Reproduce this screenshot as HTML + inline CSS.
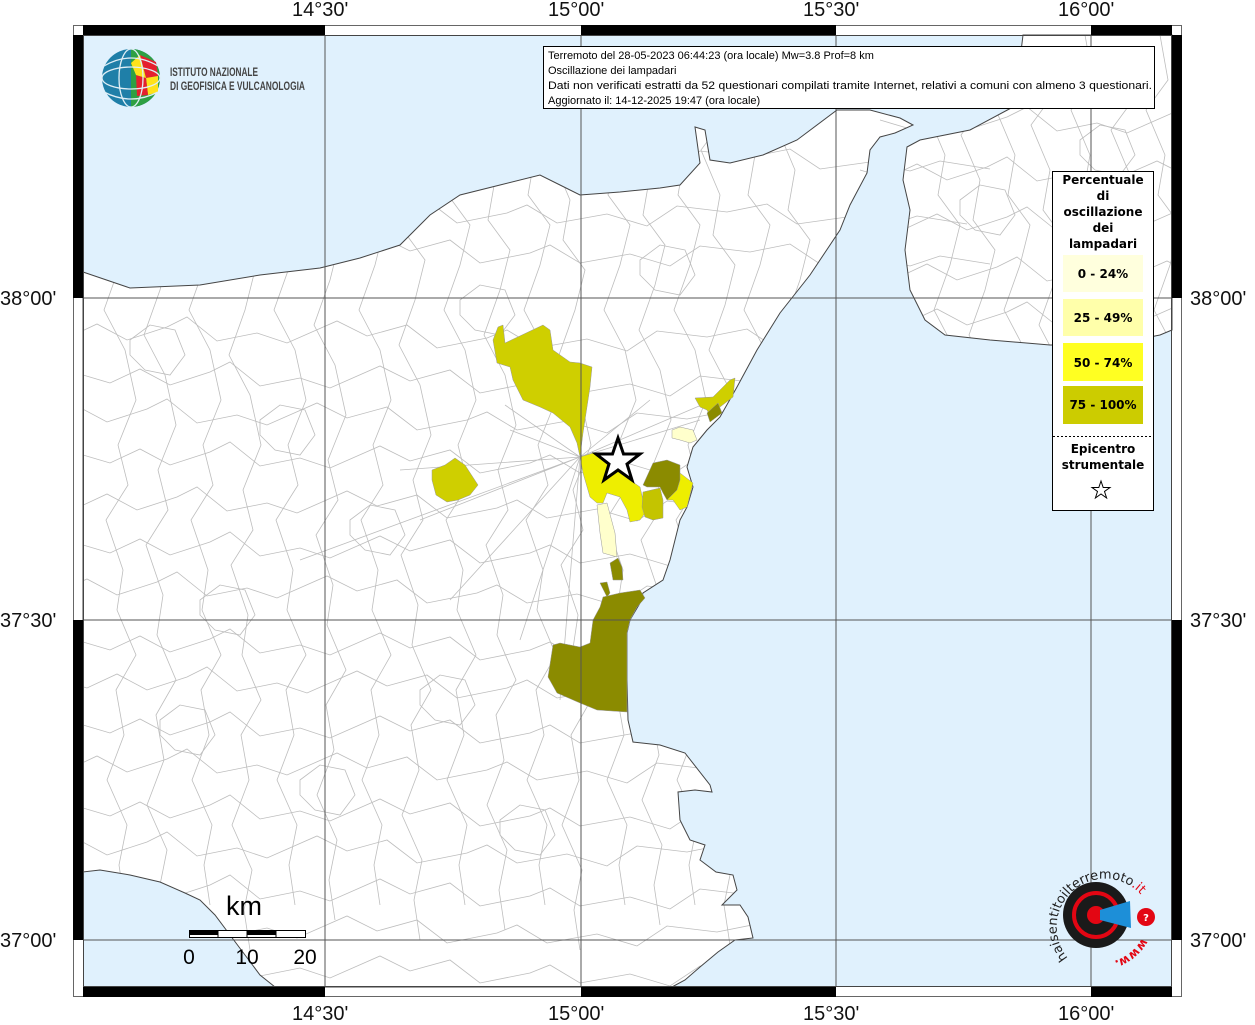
<!DOCTYPE html>
<html><head><meta charset="utf-8"><style>
html,body{margin:0;padding:0;background:#fff;}
body{width:1255px;height:1024px;position:relative;overflow:hidden;font-family:"Liberation Sans",sans-serif;}
.lab{position:absolute;font-size:20px;color:#111;line-height:1;}
</style></head><body>
<svg width="1255" height="1024" viewBox="0 0 1255 1024" style="position:absolute;left:0;top:0">
<defs>
<clipPath id="land"><path id="lp" d="M83,272 L130,288 200,285 260,275 320,268 360,258 400,245 430,215 460,195 500,185 540,175 560,185 580,195 620,192 660,188 680,185 700,163 695,127 705,130 710,160 730,163 763,155 797,140 837,110 870,110 900,118 913,125 895,133 880,137 870,150 867,173 850,205 840,230 810,275 780,313 757,350 737,387 720,417 707,430 693,447 687,467 693,487 687,507 680,520 670,560 663,580 643,593 640,603 630,620 627,633 627,680 628,720 633,742 660,745 685,753 710,785 712,792 695,790 678,792 680,820 690,840 705,845 700,860 716,872 733,875 737,890 722,905 740,905 748,917 753,938 735,940 718,952 700,967 685,980 672,987 275,987 260,975 245,955 230,935 215,915 200,900 185,893 160,882 130,875 100,870 83,872 Z M1023,35 L1172,35 1172,330 1160,335 1110,345 1050,345 990,340 945,335 925,320 910,290 905,250 910,210 903,180 907,147 920,140 970,130 1013,107 1020,60 Z"/></clipPath>
<path id="hl" d="M0,0 l27,8 l30,-14 l30,16 l40,-13 l20,-10 l30,24 l40,-8 l30,10 l50,-22 l30,15 l40,-11 l30,23 l50,-10 l20,-8 l30,18 l50,-9 l40,12 l30,-20 l50,6 l40,-8 l30,20 l50,-7 l40,9 l30,-10 l50,8"/>
<path id="vl" d="M0,0 l8,45 l-22,30 l19,45 l-7,40 l22,30 l-10,40 l-16,45 l21,40 l11,50 l-18,45 l10,40 l-22,35 l17,50 l-6,40 l19,45 l-20,35 l8,45 l-17,45 l20,45 l-8,40 l6,40"/>
<path id="bl" d="M0,0 l20,-15 l25,5 l10,25 l-15,20 l-25,-5 l-15,-15 z"/>
</defs>
<rect x="83" y="35" width="1089" height="952" fill="#e0f1fd"/>
<use href="#lp" fill="#fff"/>
<g clip-path="url(#land)" fill="none" stroke="#bdbdbd" stroke-width="0.8">
<use href="#hl" x="83" y="150"/><use href="#hl" x="60" y="205"/><use href="#hl" x="83" y="245"/>
<use href="#hl" x="40" y="330"/><use href="#hl" x="83" y="375"/><use href="#hl" x="20" y="412"/>
<use href="#hl" x="83" y="455"/><use href="#hl" x="50" y="500"/><use href="#hl" x="83" y="545"/>
<use href="#hl" x="30" y="585"/><use href="#hl" x="83" y="642"/><use href="#hl" x="60" y="680"/>
<use href="#hl" x="83" y="725"/><use href="#hl" x="40" y="762"/><use href="#hl" x="83" y="808"/>
<use href="#hl" x="20" y="845"/><use href="#hl" x="83" y="888"/><use href="#hl" x="50" y="925"/><use href="#hl" x="83" y="965"/>
<use href="#hl" x="880" y="120"/><use href="#hl" x="860" y="170"/><use href="#hl" x="880" y="220"/><use href="#hl" x="870" y="270"/><use href="#hl" x="880" y="315"/>
<use href="#vl" x="110" y="35"/><use href="#vl" x="150" y="60"/><use href="#vl" x="195" y="35"/><use href="#vl" x="235" y="80"/>
<use href="#vl" x="280" y="35"/><use href="#vl" x="320" y="50"/><use href="#vl" x="365" y="35"/><use href="#vl" x="405" y="70"/>
<use href="#vl" x="450" y="35"/><use href="#vl" x="490" y="60"/><use href="#vl" x="530" y="35"/><use href="#vl" x="565" y="80"/>
<use href="#vl" x="610" y="35"/><use href="#vl" x="645" y="55"/><use href="#vl" x="680" y="35"/><use href="#vl" x="715" y="75"/>
<use href="#vl" x="750" y="35"/><use href="#vl" x="790" y="50"/><use href="#vl" x="940" y="35"/><use href="#vl" x="975" y="60"/>
<use href="#vl" x="1010" y="35"/><use href="#vl" x="1045" y="50"/><use href="#vl" x="1085" y="35"/><use href="#vl" x="1125" y="55"/><use href="#vl" x="1160" y="35"/>
<use href="#bl" x="130" y="340"/><use href="#bl" x="260" y="420"/><use href="#bl" x="350" y="520"/><use href="#bl" x="200" y="600"/><use href="#bl" x="420" y="690"/><use href="#bl" x="300" y="780"/><use href="#bl" x="500" y="820"/><use href="#bl" x="160" y="720"/><use href="#bl" x="640" y="260"/><use href="#bl" x="460" y="300"/><use href="#bl" x="960" y="200"/><use href="#bl" x="1080" y="140"/>
<path d="M580,457 L505,405 M580,457 L510,430 M580,457 L420,520 M580,457 L300,560 M580,457 L450,600 M580,457 L520,640 M580,457 L560,700 M580,457 L700,420 M580,457 L760,380 M580,457 L650,400 M580,457 L400,470"/>
</g>
<use href="#lp" fill="none" stroke="#444" stroke-width="1"/>
<g stroke="#999" stroke-width="0.5">
<path fill="#cfcf00" d="M493,340 498,327 503,325 505,343 543,325 550,330 553,350 570,362 580,363 592,367 590,387 583,433 580,457 577,443 570,427 553,413 540,407 523,400 513,380 510,367 497,363Z"/>
<path fill="#eeee00" d="M580,457 593,453 627,467 630,480 640,487 643,500 645,513 640,520 630,522 627,510 620,497 607,493 603,503 597,503 590,497 583,473Z"/>
<path fill="#eeee00" d="M680,473 693,483 687,507 680,510 673,500 667,500Z"/>
<path fill="#8b8b00" d="M643,485 653,463 667,460 680,465 680,480 677,490 667,500 663,493 660,487 647,487Z"/>
<path fill="#c4c400" d="M643,492 660,488 663,500 663,518 653,520 645,517 642,507Z"/>
<path fill="#ffffcc" d="M597,505 607,503 615,533 617,557 603,553 600,533Z"/>
<path fill="#ffffcc" d="M672,430 680,427 693,430 697,440 690,443 680,440 672,438Z"/>
<path fill="#8b8b00" d="M610,563 618,558 622,567 623,580 613,580Z"/>
<path fill="#8b8b00" d="M600,583 607,582 610,593 607,597Z"/>
<path fill="#8b8b00" d="M603,597 620,593 640,590 645,598 637,607 630,620 627,633 627,712 597,710 580,703 557,693 548,677 553,645 560,643 580,647 590,643 593,620 600,607Z"/>
<path fill="#cfcf00" d="M695,398 713,397 730,380 735,378 733,397 720,407 712,420 707,410 700,407Z"/>
<path fill="#8b8b00" d="M707,413 718,403 722,413 710,422Z"/>
<path fill="#cfcf00" d="M432,470 445,465 455,458 465,465 478,485 470,495 458,500 447,502 436,495 432,480Z"/>
</g>
<polygon points="618,438 623.5,454 640,454 627,464 632,480 618,470 604,480 609,464 596,454 612.5,454" fill="#fff" stroke="#000" stroke-width="3"/>
<g stroke="#555" stroke-width="1">
<line x1="325" y1="35" x2="325" y2="987"/><line x1="581" y1="35" x2="581" y2="987"/><line x1="836" y1="35" x2="836" y2="987"/><line x1="1091" y1="35" x2="1091" y2="987"/>
<line x1="83" y1="298" x2="1172" y2="298"/><line x1="83" y1="620" x2="1172" y2="620"/><line x1="83" y1="940" x2="1172" y2="940"/>
</g>
<g>
<rect x="73.5" y="25.5" width="1108" height="971" fill="none" stroke="#666"/>
<rect x="83" y="25" width="242" height="10" fill="#000"/><rect x="581" y="25" width="255" height="10" fill="#000"/><rect x="1091" y="25" width="81" height="10" fill="#000"/>
<rect x="83" y="987" width="242" height="10" fill="#000"/><rect x="581" y="987" width="255" height="10" fill="#000"/><rect x="1091" y="987" width="81" height="10" fill="#000"/>
<rect x="73" y="35" width="10" height="263" fill="#000"/><rect x="73" y="620" width="10" height="320" fill="#000"/>
<rect x="1172" y="35" width="10" height="263" fill="#000"/><rect x="1172" y="620" width="10" height="320" fill="#000"/>
<rect x="83.5" y="35.5" width="1088" height="951" fill="none" stroke="#444"/>
</g>
<g>
<circle cx="131" cy="78" r="29" fill="#1f7fa8"/>
<path d="M131,49 A29,29 0 0 1 160,78 A29,29 0 0 1 131,107 Z" fill="#2ea043"/>
<path d="M140,55 L156,62 L158,76 L146,78 Z" fill="#e5202e"/>
<path d="M146,78 L158,76 L158,92 L148,95 Z" fill="#ffe21a"/>
<path d="M136,75 L146,78 L148,95 L137,96 Z" fill="#e5202e"/>
<path d="M131,63 L140,55 L146,78 L136,75 Z" fill="#ffe21a"/>
<g fill="none" stroke="#dfeef5" stroke-width="1.3"><ellipse cx="131" cy="78" rx="12" ry="29"/><ellipse cx="131" cy="78" rx="29" ry="11"/><path d="M104,66 Q131,50 158,66 M104,92 Q131,106 158,92"/></g>
<text x="170" y="76" font-family="Liberation Sans Narrow,Liberation Sans,sans-serif" font-size="12" font-weight="bold" fill="#444" textLength="88" lengthAdjust="spacingAndGlyphs">ISTITUTO NAZIONALE</text>
<text x="170" y="90" font-family="Liberation Sans Narrow,Liberation Sans,sans-serif" font-size="12" font-weight="bold" fill="#444" textLength="135" lengthAdjust="spacingAndGlyphs">DI GEOFISICA E VULCANOLOGIA</text>
</g>
<rect x="543.5" y="46.5" width="611" height="62" fill="#fff" stroke="#000"/>
<g font-family="Liberation Sans,sans-serif" font-size="11" fill="#000">
<text x="548" y="59">Terremoto del 28-05-2023 06:44:23 (ora locale) Mw=3.8 Prof=8 km</text>
<text x="548" y="74">Oscillazione dei lampadari</text>
<text x="548" y="89" textLength="604" lengthAdjust="spacingAndGlyphs">Dati non verificati estratti da 52 questionari compilati tramite Internet, relativi a comuni con almeno 3 questionari.</text>
<text x="548" y="104">Aggiornato il: 14-12-2025 19:47 (ora locale)</text>
</g>
<rect x="1052.5" y="171.5" width="101" height="339" fill="#fff" stroke="#000"/>
<g font-family="DejaVu Sans,sans-serif" font-size="12" font-weight="bold" text-anchor="middle" fill="#000">
<text x="1103" y="184">Percentuale</text><text x="1103" y="200">di</text><text x="1103" y="216">oscillazione</text><text x="1103" y="232">dei</text><text x="1103" y="248">lampadari</text>
<rect x="1063" y="255" width="80" height="37" fill="#ffffdd"/><text x="1103" y="278">0 - 24%</text>
<rect x="1063" y="299" width="80" height="37" fill="#ffffaa"/><text x="1103" y="322">25 - 49%</text>
<rect x="1063" y="343" width="80" height="38" fill="#ffff22"/><text x="1103" y="367">50 - 74%</text>
<rect x="1063" y="386" width="80" height="38" fill="#cccc00"/><text x="1103" y="409">75 - 100%</text>
<line x1="1053" y1="436.5" x2="1153" y2="436.5" stroke="#000" stroke-dasharray="2,2"/>
<text x="1103" y="453">Epicentro</text><text x="1103" y="469">strumentale</text>
</g>
<polygon points="1101,481 1103.2,487.5 1110,487.5 1104.5,491.5 1106.6,498 1101,494 1095.4,498 1097.5,491.5 1092,487.5 1098.8,487.5" fill="#fff" stroke="#000" stroke-width="1"/>
<text x="226" y="915" font-family="Liberation Sans,sans-serif" font-size="27" fill="#000">km</text>
<rect x="189.5" y="930.5" width="116" height="7" fill="#fff" stroke="#000"/>
<rect x="189" y="930" width="29" height="5" fill="#000"/><rect x="247" y="930" width="29" height="5" fill="#000"/>
<line x1="218" y1="930" x2="218" y2="938" stroke="#000"/><line x1="247" y1="930" x2="247" y2="938" stroke="#000"/><line x1="276" y1="930" x2="276" y2="938" stroke="#000"/>
<g font-family="Liberation Sans,sans-serif" font-size="21" fill="#000" text-anchor="middle"><text x="189" y="964">0</text><text x="247" y="964">10</text><text x="305" y="964">20</text></g>
<g>
<circle cx="1096" cy="915" r="33" fill="#1a1a1a"/>
<circle cx="1096" cy="915" r="22" fill="none" stroke="#e30613" stroke-width="4"/>
<circle cx="1096" cy="915" r="9" fill="#e30613"/>
<path d="M1100,910 L1130,901 L1131,928 L1100,920 Z" fill="#1d8fd8"/>
<circle cx="1146" cy="917" r="9" fill="#e30613"/>
<text x="1146" y="921" font-family="DejaVu Sans,sans-serif" font-size="10" font-weight="bold" fill="#fff" text-anchor="middle">?</text>
<path id="arc" d="M1068,958 A47,47 0 1 1 1142,896" fill="none"/>
<text font-family="DejaVu Sans,sans-serif" font-size="13" fill="#222"><textPath href="#arc">haisentitoilterremoto<tspan fill="#e30613">.it</tspan></textPath></text>
<path id="arc2" d="M1142,938 A47,47 0 0 1 1102,963" fill="none"/>
<text font-family="DejaVu Sans,sans-serif" font-size="12" font-weight="bold" fill="#e30613"><textPath href="#arc2">www.</textPath></text>
</g>
</svg>
<div class="lab" style="left:292px;top:0px">14°30'</div>
<div class="lab" style="left:548px;top:0px">15°00'</div>
<div class="lab" style="left:803px;top:0px">15°30'</div>
<div class="lab" style="left:1058px;top:0px">16°00'</div>
<div class="lab" style="left:292px;top:1004px">14°30'</div>
<div class="lab" style="left:548px;top:1004px">15°00'</div>
<div class="lab" style="left:803px;top:1004px">15°30'</div>
<div class="lab" style="left:1058px;top:1004px">16°00'</div>
<div class="lab" style="left:0px;top:289px">38°00'</div>
<div class="lab" style="left:0px;top:611px">37°30'</div>
<div class="lab" style="left:0px;top:931px">37°00'</div>
<div class="lab" style="left:1190px;top:289px">38°00'</div>
<div class="lab" style="left:1190px;top:611px">37°30'</div>
<div class="lab" style="left:1190px;top:931px">37°00'</div>
</body></html>
